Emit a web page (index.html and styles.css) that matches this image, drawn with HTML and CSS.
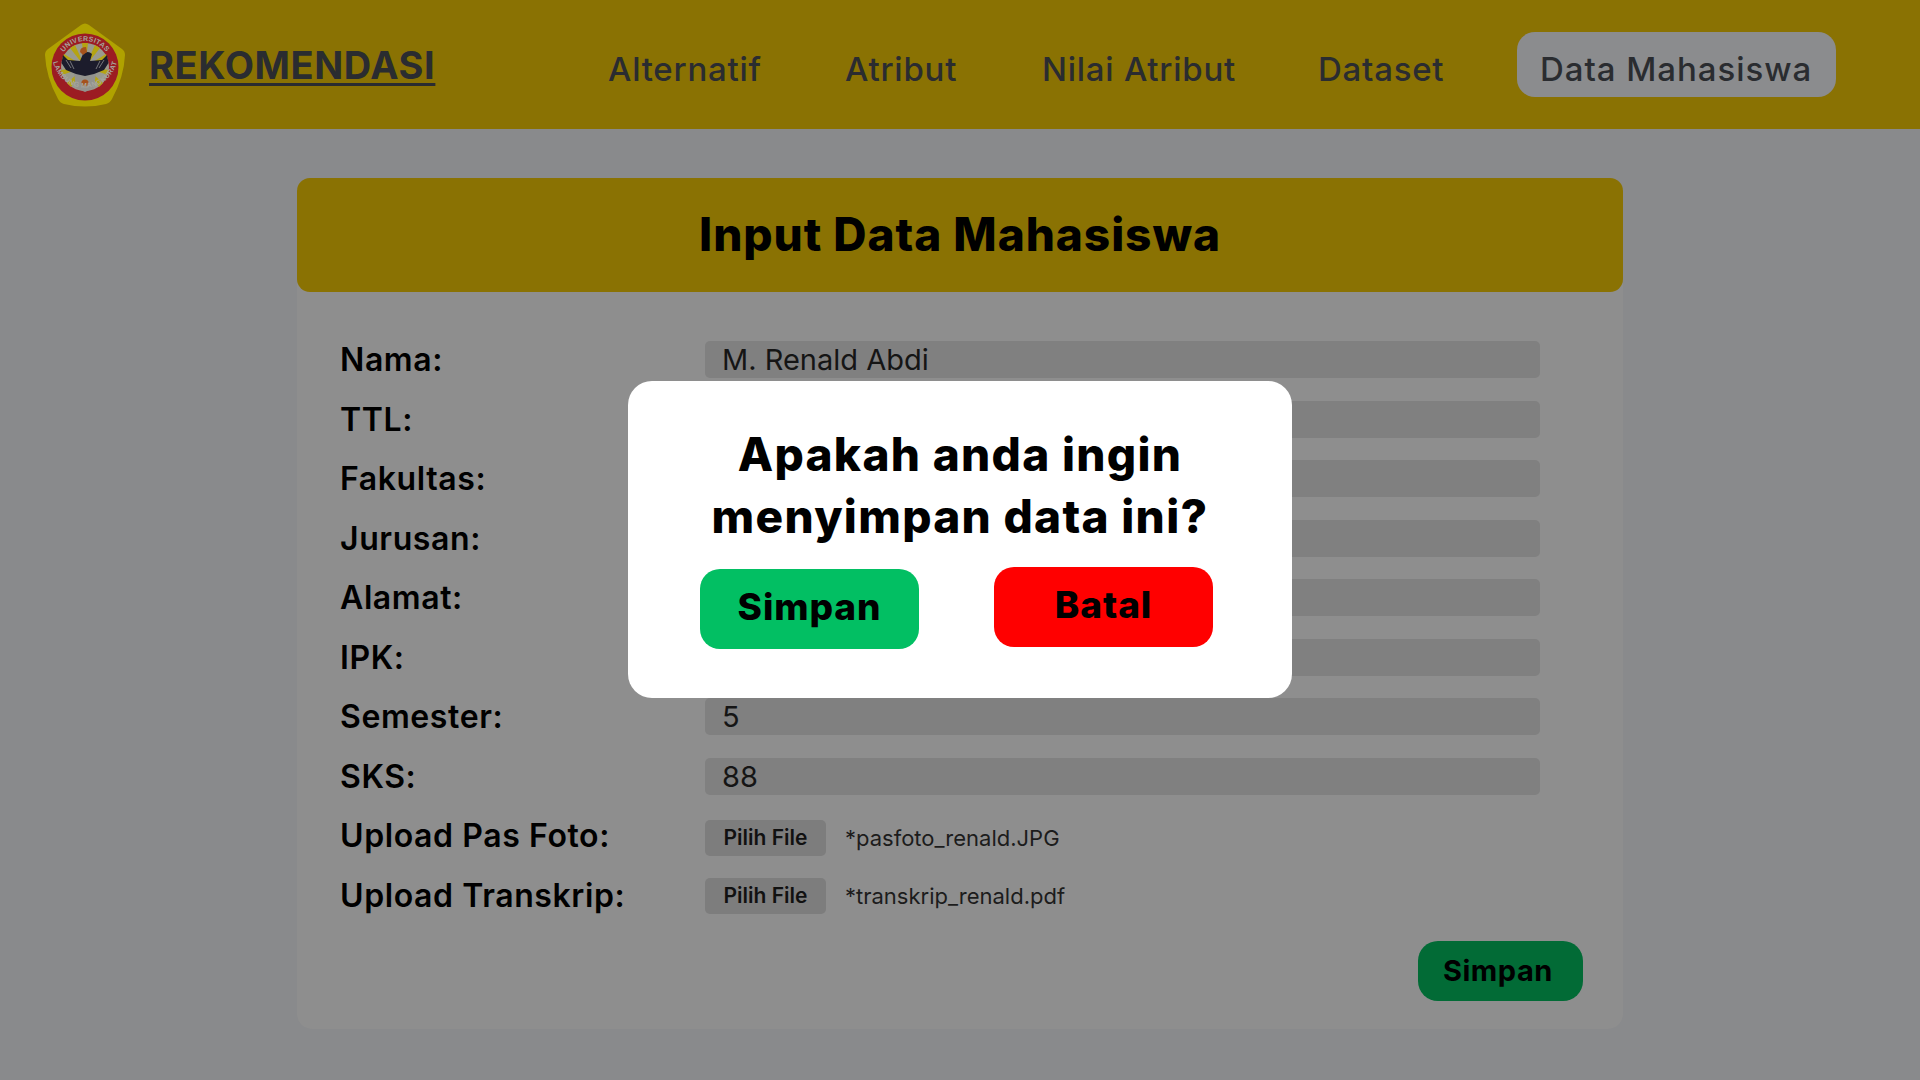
FILE: index.html
```html
<!DOCTYPE html>
<html lang="id">
<head>
<meta charset="utf-8">
<title>Input Data Mahasiswa</title>
<link rel="stylesheet" href="styles.css">
</head>
<body>
<header class="topbar">
  <a class="brand" href="#">
    <svg class="logo" viewBox="0 0 84 84" aria-label="Logo Universitas Lambung Mangkurat">
      <defs>
        <path id="arcTop" d="M15 44 A26 26 0 0 1 67 44"/>
        <path id="arcBottom" d="M9 38 A32.5 32.5 0 0 0 73 38"/>
      </defs>
      <path class="logo-shield" d="M41 0.5 Q43 0.5 45 2 L78 26 Q81 28 81 32 Q80 54 68 76 Q66 80 62 81 Q41 86 20 81 Q16 80 14 76 Q2 54 1 32 Q1 28 4 26 L37 2 Q39 0.5 41 0.5Z"/>
      <circle class="logo-ring" cx="41" cy="44" r="33.5"/>
      <circle class="logo-disc" cx="41" cy="44" r="24"/>
      <path class="logo-rays" d="M41 44 L38 20 L44 20Z M41 44 L51 22 L56 25Z M41 44 L62 31 L64 36Z M41 44 L65 47 L64 52Z M41 44 L59 60 L55 64Z M41 44 L31 22 L26 25Z M41 44 L20 31 L18 36Z M41 44 L17 47 L18 52Z M41 44 L23 60 L27 64Z"/>
      <path class="logo-chest" d="M30 50 H52 L50 65 L41 69 L32 65Z"/>
      <path class="logo-eagle" d="M39 31 Q44 27 48 31 L46 38 L58 37 L63 32 L64.500 40 L60 47 L50 51 L41 53 L32 51 L22 47 L17.500 40 L19 32 L24 37 L36 38Z"/>
      <path class="logo-feather" d="M22 37 L27 45 M26 38 L30 46 M56 38 L52 46 M60 37 L55 45"/>
      <path class="logo-crest" d="M36 29 Q36 24 42 24 L43 29 L39 32Z"/>
      <circle class="logo-crest" cx="41" cy="60" r="3.600"/>
      <text class="logo-text"><textPath href="#arcTop" startOffset="50%" text-anchor="middle">UNIVERSITAS</textPath></text>
      <text class="logo-text"><textPath href="#arcBottom" startOffset="50%" text-anchor="middle">LAMBUNG MANGKURAT</textPath></text>
    </svg>
    <span class="brand-name">REKOMENDASI</span>
  </a>
  <nav class="nav">
    <a class="nav-item nav-alt" href="#">Alternatif</a>
    <a class="nav-item nav-atr" href="#">Atribut</a>
    <a class="nav-item nav-nil" href="#">Nilai Atribut</a>
    <a class="nav-item nav-dat" href="#">Dataset</a>
    <a class="nav-item nav-mhs active" href="#">Data Mahasiswa</a>
  </nav>
</header>

<main class="page">
  <section class="card">
    <h1 class="card-title">Input Data Mahasiswa</h1>
    <form class="card-body">
      <div class="fields">
        <label class="field-label">Nama:</label><div class="input">M. Renald Abdi</div>
        <label class="field-label">TTL:</label><div class="input"></div>
        <label class="field-label">Fakultas:</label><div class="input"></div>
        <label class="field-label">Jurusan:</label><div class="input"></div>
        <label class="field-label">Alamat:</label><div class="input"></div>
        <label class="field-label">IPK:</label><div class="input"></div>
        <label class="field-label">Semester:</label><div class="input">5</div>
        <label class="field-label">SKS:</label><div class="input">88</div>
        <label class="field-label">Upload Pas Foto:</label>
        <div class="upload"><span class="file-btn">Pilih File</span><span class="file-name">*pasfoto_renald.JPG</span></div>
        <label class="field-label">Upload Transkrip:</label>
        <div class="upload upload-last"><span class="file-btn">Pilih File</span><span class="file-name">*transkrip_renald.pdf</span></div>
      </div>
      <div class="actions"><span class="save-btn">Simpan</span></div>
    </form>
  </section>
</main>

<div class="overlay">
  <div class="dialog">
    <h2 class="dialog-title">Apakah anda ingin<br>menyimpan data ini?</h2>
    <div class="dialog-actions">
      <button class="dialog-btn confirm" type="button">Simpan</button>
      <button class="dialog-btn cancel" type="button">Batal</button>
    </div>
  </div>
</div>
</body>
</html>
```

FILE: styles.css
```css
* { box-sizing: border-box; }
html, body { height: 100%; }
body {
  margin: 0;
  background: #898a8c;
  color: #000;
  font-family: Inter, "Noto Sans", sans-serif;
  overflow: hidden;
}
a { color: inherit; text-decoration: none; }

.topbar {
  height: 129px;
  background: #8a7203;
  color: #2a2c30;
  display: flex;
  align-items: center;
  padding-left: 44px;
}
.brand { display: flex; align-items: center; gap: 21px; width: 564px; }
.logo { width: 84px; height: 84px; flex: none; }
.logo-shield { fill: #b0a200; }
.logo-ring { fill: #9c1c22; }
.logo-disc { fill: #9a9a8e; }
.logo-rays { fill: #b5a412; }
.logo-crest { fill: #a5521c; }
.logo-eagle { fill: #1c1c2c; }
.logo-feather { stroke: #77777c; stroke-width: 1; fill: none; }
.logo-chest { fill: #93938e; }
.logo-text { fill: #a6a69e; font: 700 7px "Liberation Sans", sans-serif; letter-spacing: .3px; }
.brand-name {
  font-size: 38px;
  font-weight: 700;
  letter-spacing: .6px;
  text-decoration: underline;
  text-decoration-thickness: 3px;
  text-underline-offset: 4px;
}
.nav { display: flex; align-items: center; }
.nav-item {
  font-size: 33px;
  font-weight: 500;
  letter-spacing: .75px;
  line-height: 65px;
  white-space: nowrap;
  display: block;
  padding: 5px 0 0;
  height: 65px;
}
.nav-alt { width: 237px; }
.nav-atr { width: 197px; }
.nav-nil { width: 276px; }
.nav-dat { width: 199px; }
.nav-mhs {
  width: 319px;
  padding-left: 23px;
  border-radius: 18px;
  background: #8b8c8e;
  letter-spacing: .95px;
}

.page { padding: 49px 297px 0; }
.card { height: 851px; background: #8e8e8e; border-radius: 15px; }
.card-title {
  margin: 0;
  height: 114px;
  line-height: 112px;
  background: #8a7203;
  border-radius: 13px;
  text-align: center;
  font-size: 46px;
  font-weight: 800;
  letter-spacing: .95px;
}
.card-body { padding: 49px 40px 0 43px; }
.fields {
  display: grid;
  grid-template-columns: 365px 835px;
  grid-auto-rows: 37px;
  row-gap: 22.5px;
  align-items: center;
}
.field-label { font-size: 32px; font-weight: 600; letter-spacing: .6px; line-height: 37px; white-space: nowrap; }
.input {
  height: 37px;
  line-height: 37px;
  background: #808080;
  border-radius: 5px;
  padding-left: 17px;
  font-size: 29px;
  color: #151515;
}
.upload { display: flex; align-items: center; gap: 19px; margin-top: 4px; }
.upload-last { margin-top: 1px; }
.file-btn {
  width: 121px;
  height: 36px;
  line-height: 36px;
  background: #7d7d7d;
  border-radius: 5px;
  text-align: center;
  font-size: 21px;
  font-weight: 600;
  color: #111;
}
.file-name { font-size: 22px; color: #1c1c1c; }
.actions { display: flex; justify-content: flex-end; margin-top: 27px; }
.save-btn {
  width: 165px;
  height: 60px;
  line-height: 60px;
  background: #026b36;
  border-radius: 20px;
  padding-left: 25px;
  font-size: 29px;
  font-weight: 700;
  letter-spacing: .5px;
}

.overlay {
  position: fixed;
  inset: 0;
  padding-bottom: 1px;
  display: flex;
  align-items: center;
  justify-content: center;
}
.dialog {
  width: 664px;
  height: 317px;
  background: #fff;
  border-radius: 24px;
  padding: 42px 72px 0;
}
.dialog-title {
  margin: 0;
  text-align: center;
  font-size: 46px;
  line-height: 62px;
  font-weight: 800;
  letter-spacing: 1.3px;
  white-space: nowrap;
}
.dialog-actions {
  display: flex;
  justify-content: space-between;
  align-items: flex-start;
  margin-top: 20px;
  padding-right: 7px;
}
.dialog-btn {
  width: 219px;
  height: 80px;
  border: 0;
  border-radius: 20px;
  font: 800 37px Inter, "Noto Sans", sans-serif;
  letter-spacing: .9px;
  color: #000;
  padding: 0 0 5px;
}
.confirm { background: #02bf63; margin-top: 2px; }
.cancel { background: #ff0000; }
```
